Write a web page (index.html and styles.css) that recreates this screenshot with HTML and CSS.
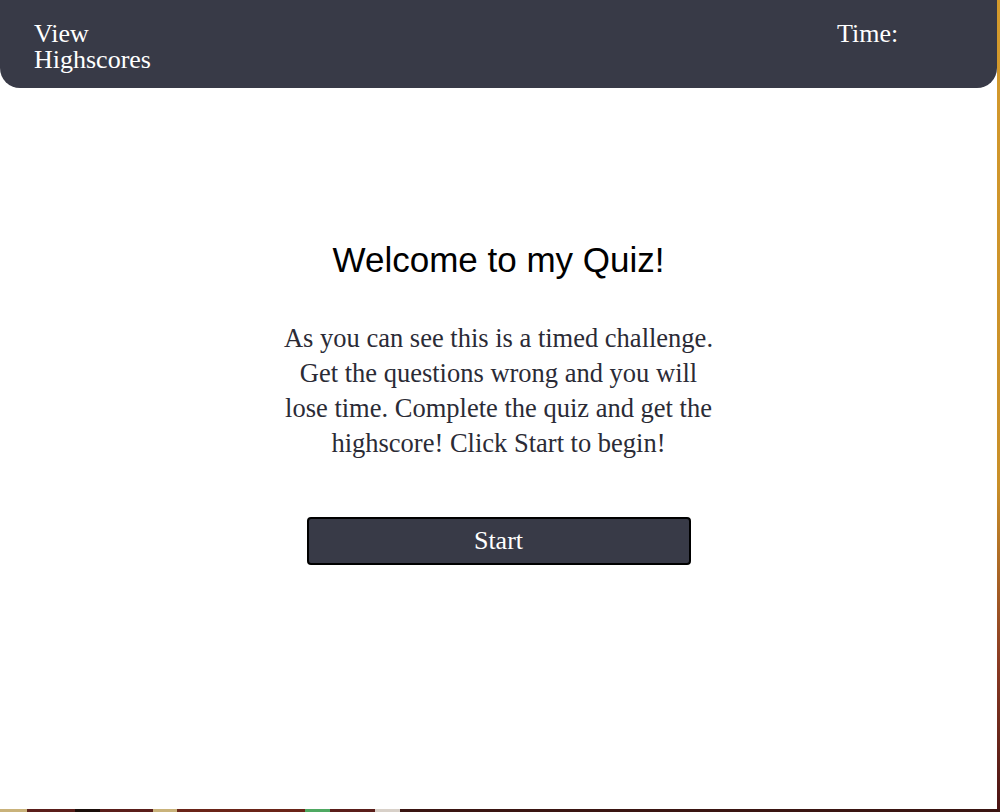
FILE: index.html
```html
<!DOCTYPE html>
<html lang="en">
<head>
<meta charset="utf-8">
<title>Quiz</title>
<link rel="stylesheet" href="styles.css">
</head>
<body>
<div class="desktop">
  <div class="window">
    <div class="page">
      <header class="topbar">
        <a class="highscores">View Highscores</a>
        <div class="timer">Time:</div>
      </header>
      <main class="intro">
        <h1 class="title">Welcome to my Quiz!</h1>
        <p class="blurb">As you can see this is a timed challenge. Get the questions wrong and you will lose time. Complete the quiz and get the highscore! Click Start to begin!</p>
        <button class="start">Start</button>
      </main>
    </div>
    <div class="edge-right"></div>
  </div>
  <div class="edge-bottom"></div>
</div>
</body>
</html>
```
FILE: styles.css
```css
html, body {
  margin: 0;
  padding: 0;
  background: #3a1512;
}
.desktop {
  width: 1000px;
  height: 812px;
  display: flex;
  flex-direction: column;
  overflow: hidden;
}
.window {
  display: flex;
  height: 809px;
}
.page {
  width: 997px;
  height: 809px;
  background: #ffffff;
  font-family: "Liberation Serif", "Times New Roman", serif;
}
.edge-right {
  width: 3px;
  background: linear-gradient(#d49a2c 0%, #c98f28 60%, #8a3a22 82%, #4a1414 100%);
}
.edge-bottom {
  height: 3px;
  background: linear-gradient(90deg, #c9b27a 0 2.7%, #5a1e1a 2.7% 7.5%, #1a0e0a 7.5% 10%, #5a1e1a 10% 15.3%, #c9b27a 15.3% 17.7%, #6a2418 17.7% 30.5%, #4fa862 30.5% 33%, #5a1e1a 33% 37.5%, #d8d0c8 37.5% 40%, #3a1512 40% 100%);
}
.topbar {
  height: 88px;
  background: #383a47;
  border-radius: 0 0 20px 20px;
  display: flex;
  justify-content: space-between;
  align-items: flex-start;
  box-sizing: border-box;
  padding: 21px 99px 0 34px;
  color: #ffffff;
  font-size: 26px;
  line-height: 26px;
}
.highscores {
  display: block;
  width: 130px;
  color: #ffffff;
}
.timer {
  width: 61px;
}
.intro {
  display: flex;
  flex-direction: column;
  align-items: center;
  padding-top: 152px;
}
.title {
  margin: 0;
  font-family: "Liberation Sans", Arial, sans-serif;
  font-weight: normal;
  font-size: 35px;
  line-height: 40px;
  color: #000000;
}
.blurb {
  width: 440px;
  margin: 41px 0 0;
  text-align: center;
  font-size: 26.5px;
  line-height: 35px;
  color: #2b2b36;
}
.start {
  margin-top: 56px;
  width: 384px;
  height: 48px;
  background: #383a47;
  border: 2px solid #000000;
  border-radius: 4px;
  color: #ffffff;
  font-family: "Liberation Serif", "Times New Roman", serif;
  font-size: 26px;
  padding: 0;
}
```
